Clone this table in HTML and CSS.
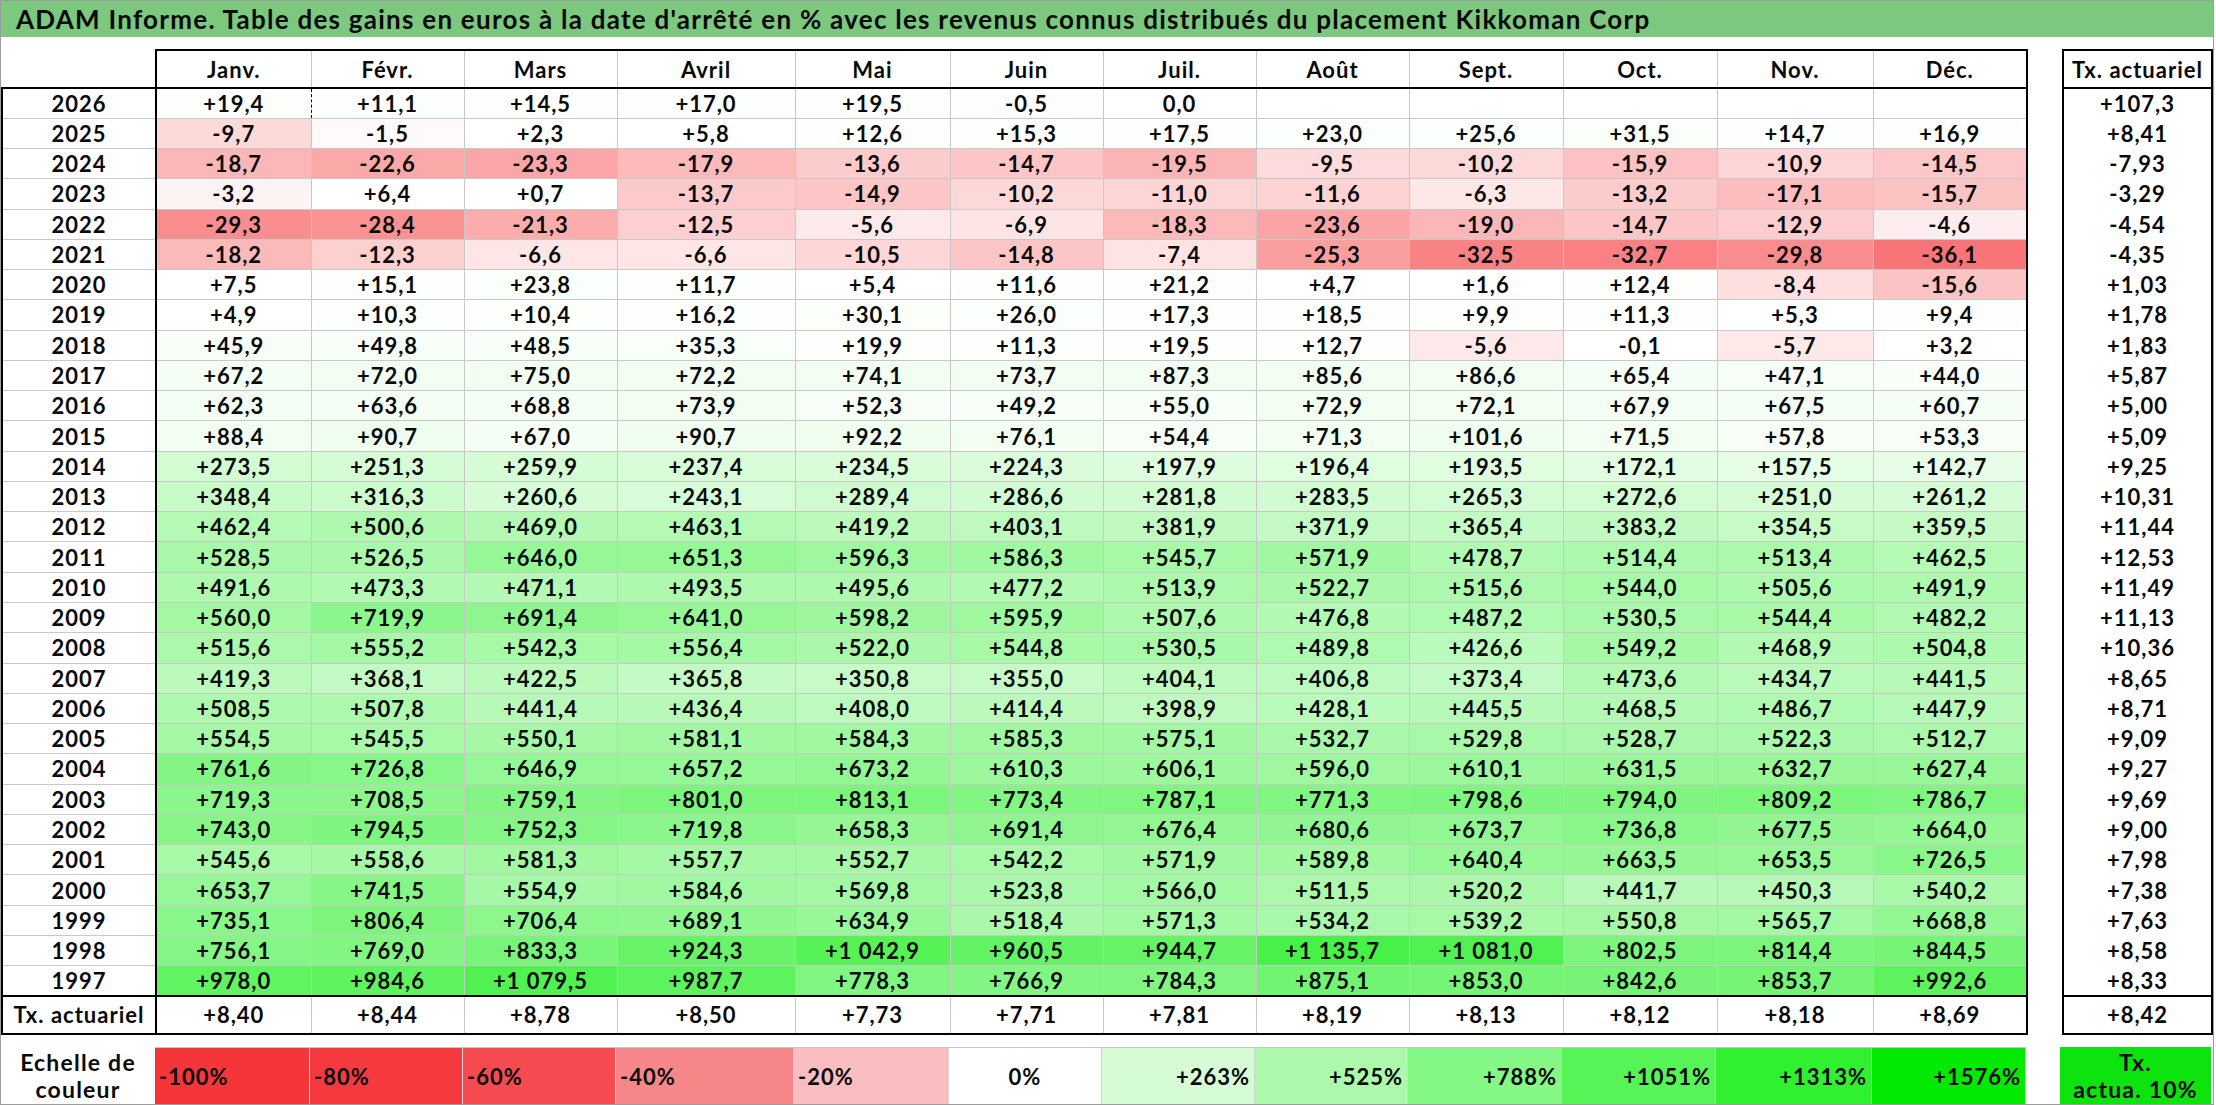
FILE: index.html
```html
<!DOCTYPE html>
<html lang="fr">
<head>
<meta charset="utf-8">
<title>ADAM Informe - Kikkoman Corp</title>
<link rel="stylesheet" href="styles.css">
</head>
<body>
<div class="sheet">
  <div class="title">ADAM Informe. Table des gains en euros à la date d'arrêté en % avec les revenus connus distribués du placement Kikkoman Corp</div>
  <div class="tables">
    <table class="main">
      <colgroup>
        <col class="c-year"><col style="width:155px"><col style="width:153px"><col style="width:153px"><col style="width:178px"><col style="width:155px"><col style="width:153px"><col style="width:153px"><col style="width:153px"><col style="width:154px"><col style="width:154px"><col style="width:156px"><col style="width:154px">
      </colgroup>
      <thead>
        <tr class="hdr"><th class="corner"></th><th>Janv.</th><th>Févr.</th><th>Mars</th><th>Avril</th><th>Mai</th><th>Juin</th><th>Juil.</th><th>Août</th><th>Sept.</th><th>Oct.</th><th>Nov.</th><th>Déc.</th></tr>
      </thead>
      <tbody>
        <tr><th>2026</th><td class="v dash-r">+19,4</td><td class="v dash-l">+11,1</td><td class="v">+14,5</td><td class="v">+17,0</td><td class="v">+19,5</td><td class="v">-0,5</td><td class="v">0,0</td><td class="v"></td><td class="v"></td><td class="v"></td><td class="v"></td><td class="v"></td></tr>
        <tr><th>2025</th><td class="v">-9,7</td><td class="v">-1,5</td><td class="v">+2,3</td><td class="v">+5,8</td><td class="v">+12,6</td><td class="v">+15,3</td><td class="v">+17,5</td><td class="v">+23,0</td><td class="v">+25,6</td><td class="v">+31,5</td><td class="v">+14,7</td><td class="v">+16,9</td></tr>
        <tr><th>2024</th><td class="v">-18,7</td><td class="v">-22,6</td><td class="v">-23,3</td><td class="v">-17,9</td><td class="v">-13,6</td><td class="v">-14,7</td><td class="v">-19,5</td><td class="v">-9,5</td><td class="v">-10,2</td><td class="v">-15,9</td><td class="v">-10,9</td><td class="v">-14,5</td></tr>
        <tr><th>2023</th><td class="v">-3,2</td><td class="v">+6,4</td><td class="v">+0,7</td><td class="v">-13,7</td><td class="v">-14,9</td><td class="v">-10,2</td><td class="v">-11,0</td><td class="v">-11,6</td><td class="v">-6,3</td><td class="v">-13,2</td><td class="v">-17,1</td><td class="v">-15,7</td></tr>
        <tr><th>2022</th><td class="v">-29,3</td><td class="v">-28,4</td><td class="v">-21,3</td><td class="v">-12,5</td><td class="v">-5,6</td><td class="v">-6,9</td><td class="v">-18,3</td><td class="v">-23,6</td><td class="v">-19,0</td><td class="v">-14,7</td><td class="v">-12,9</td><td class="v">-4,6</td></tr>
        <tr><th>2021</th><td class="v">-18,2</td><td class="v">-12,3</td><td class="v">-6,6</td><td class="v">-6,6</td><td class="v">-10,5</td><td class="v">-14,8</td><td class="v">-7,4</td><td class="v">-25,3</td><td class="v">-32,5</td><td class="v">-32,7</td><td class="v">-29,8</td><td class="v">-36,1</td></tr>
        <tr><th>2020</th><td class="v">+7,5</td><td class="v">+15,1</td><td class="v">+23,8</td><td class="v">+11,7</td><td class="v">+5,4</td><td class="v">+11,6</td><td class="v">+21,2</td><td class="v">+4,7</td><td class="v">+1,6</td><td class="v">+12,4</td><td class="v">-8,4</td><td class="v">-15,6</td></tr>
        <tr><th>2019</th><td class="v">+4,9</td><td class="v">+10,3</td><td class="v">+10,4</td><td class="v">+16,2</td><td class="v">+30,1</td><td class="v">+26,0</td><td class="v">+17,3</td><td class="v">+18,5</td><td class="v">+9,9</td><td class="v">+11,3</td><td class="v">+5,3</td><td class="v">+9,4</td></tr>
        <tr><th>2018</th><td class="v">+45,9</td><td class="v">+49,8</td><td class="v">+48,5</td><td class="v">+35,3</td><td class="v">+19,9</td><td class="v">+11,3</td><td class="v">+19,5</td><td class="v">+12,7</td><td class="v">-5,6</td><td class="v">-0,1</td><td class="v">-5,7</td><td class="v">+3,2</td></tr>
        <tr><th>2017</th><td class="v">+67,2</td><td class="v">+72,0</td><td class="v">+75,0</td><td class="v">+72,2</td><td class="v">+74,1</td><td class="v">+73,7</td><td class="v">+87,3</td><td class="v">+85,6</td><td class="v">+86,6</td><td class="v">+65,4</td><td class="v">+47,1</td><td class="v">+44,0</td></tr>
        <tr><th>2016</th><td class="v">+62,3</td><td class="v">+63,6</td><td class="v">+68,8</td><td class="v">+73,9</td><td class="v">+52,3</td><td class="v">+49,2</td><td class="v">+55,0</td><td class="v">+72,9</td><td class="v">+72,1</td><td class="v">+67,9</td><td class="v">+67,5</td><td class="v">+60,7</td></tr>
        <tr><th>2015</th><td class="v">+88,4</td><td class="v">+90,7</td><td class="v">+67,0</td><td class="v">+90,7</td><td class="v">+92,2</td><td class="v">+76,1</td><td class="v">+54,4</td><td class="v">+71,3</td><td class="v">+101,6</td><td class="v">+71,5</td><td class="v">+57,8</td><td class="v">+53,3</td></tr>
        <tr><th>2014</th><td class="v">+273,5</td><td class="v">+251,3</td><td class="v">+259,9</td><td class="v">+237,4</td><td class="v">+234,5</td><td class="v">+224,3</td><td class="v">+197,9</td><td class="v">+196,4</td><td class="v">+193,5</td><td class="v">+172,1</td><td class="v">+157,5</td><td class="v">+142,7</td></tr>
        <tr><th>2013</th><td class="v">+348,4</td><td class="v">+316,3</td><td class="v">+260,6</td><td class="v">+243,1</td><td class="v">+289,4</td><td class="v">+286,6</td><td class="v">+281,8</td><td class="v">+283,5</td><td class="v">+265,3</td><td class="v">+272,6</td><td class="v">+251,0</td><td class="v">+261,2</td></tr>
        <tr><th>2012</th><td class="v">+462,4</td><td class="v">+500,6</td><td class="v">+469,0</td><td class="v">+463,1</td><td class="v">+419,2</td><td class="v">+403,1</td><td class="v">+381,9</td><td class="v">+371,9</td><td class="v">+365,4</td><td class="v">+383,2</td><td class="v">+354,5</td><td class="v">+359,5</td></tr>
        <tr><th>2011</th><td class="v">+528,5</td><td class="v">+526,5</td><td class="v">+646,0</td><td class="v">+651,3</td><td class="v">+596,3</td><td class="v">+586,3</td><td class="v">+545,7</td><td class="v">+571,9</td><td class="v">+478,7</td><td class="v">+514,4</td><td class="v">+513,4</td><td class="v">+462,5</td></tr>
        <tr><th>2010</th><td class="v">+491,6</td><td class="v">+473,3</td><td class="v">+471,1</td><td class="v">+493,5</td><td class="v">+495,6</td><td class="v">+477,2</td><td class="v">+513,9</td><td class="v">+522,7</td><td class="v">+515,6</td><td class="v">+544,0</td><td class="v">+505,6</td><td class="v">+491,9</td></tr>
        <tr><th>2009</th><td class="v">+560,0</td><td class="v">+719,9</td><td class="v">+691,4</td><td class="v">+641,0</td><td class="v">+598,2</td><td class="v">+595,9</td><td class="v">+507,6</td><td class="v">+476,8</td><td class="v">+487,2</td><td class="v">+530,5</td><td class="v">+544,4</td><td class="v">+482,2</td></tr>
        <tr><th>2008</th><td class="v">+515,6</td><td class="v">+555,2</td><td class="v">+542,3</td><td class="v">+556,4</td><td class="v">+522,0</td><td class="v">+544,8</td><td class="v">+530,5</td><td class="v">+489,8</td><td class="v">+426,6</td><td class="v">+549,2</td><td class="v">+468,9</td><td class="v">+504,8</td></tr>
        <tr><th>2007</th><td class="v">+419,3</td><td class="v">+368,1</td><td class="v">+422,5</td><td class="v">+365,8</td><td class="v">+350,8</td><td class="v">+355,0</td><td class="v">+404,1</td><td class="v">+406,8</td><td class="v">+373,4</td><td class="v">+473,6</td><td class="v">+434,7</td><td class="v">+441,5</td></tr>
        <tr><th>2006</th><td class="v">+508,5</td><td class="v">+507,8</td><td class="v">+441,4</td><td class="v">+436,4</td><td class="v">+408,0</td><td class="v">+414,4</td><td class="v">+398,9</td><td class="v">+428,1</td><td class="v">+445,5</td><td class="v">+468,5</td><td class="v">+486,7</td><td class="v">+447,9</td></tr>
        <tr><th>2005</th><td class="v">+554,5</td><td class="v">+545,5</td><td class="v">+550,1</td><td class="v">+581,1</td><td class="v">+584,3</td><td class="v">+585,3</td><td class="v">+575,1</td><td class="v">+532,7</td><td class="v">+529,8</td><td class="v">+528,7</td><td class="v">+522,3</td><td class="v">+512,7</td></tr>
        <tr><th>2004</th><td class="v">+761,6</td><td class="v">+726,8</td><td class="v">+646,9</td><td class="v">+657,2</td><td class="v">+673,2</td><td class="v">+610,3</td><td class="v">+606,1</td><td class="v">+596,0</td><td class="v">+610,1</td><td class="v">+631,5</td><td class="v">+632,7</td><td class="v">+627,4</td></tr>
        <tr><th>2003</th><td class="v">+719,3</td><td class="v">+708,5</td><td class="v">+759,1</td><td class="v">+801,0</td><td class="v">+813,1</td><td class="v">+773,4</td><td class="v">+787,1</td><td class="v">+771,3</td><td class="v">+798,6</td><td class="v">+794,0</td><td class="v">+809,2</td><td class="v">+786,7</td></tr>
        <tr><th>2002</th><td class="v">+743,0</td><td class="v">+794,5</td><td class="v">+752,3</td><td class="v">+719,8</td><td class="v">+658,3</td><td class="v">+691,4</td><td class="v">+676,4</td><td class="v">+680,6</td><td class="v">+673,7</td><td class="v">+736,8</td><td class="v">+677,5</td><td class="v">+664,0</td></tr>
        <tr><th>2001</th><td class="v">+545,6</td><td class="v">+558,6</td><td class="v">+581,3</td><td class="v">+557,7</td><td class="v">+552,7</td><td class="v">+542,2</td><td class="v">+571,9</td><td class="v">+589,8</td><td class="v">+640,4</td><td class="v">+663,5</td><td class="v">+653,5</td><td class="v">+726,5</td></tr>
        <tr><th>2000</th><td class="v">+653,7</td><td class="v">+741,5</td><td class="v">+554,9</td><td class="v">+584,6</td><td class="v">+569,8</td><td class="v">+523,8</td><td class="v">+566,0</td><td class="v">+511,5</td><td class="v">+520,2</td><td class="v">+441,7</td><td class="v">+450,3</td><td class="v">+540,2</td></tr>
        <tr><th>1999</th><td class="v">+735,1</td><td class="v">+806,4</td><td class="v">+706,4</td><td class="v">+689,1</td><td class="v">+634,9</td><td class="v">+518,4</td><td class="v">+571,3</td><td class="v">+534,2</td><td class="v">+539,2</td><td class="v">+550,8</td><td class="v">+565,7</td><td class="v">+668,8</td></tr>
        <tr><th>1998</th><td class="v">+756,1</td><td class="v">+769,0</td><td class="v">+833,3</td><td class="v">+924,3</td><td class="v">+1&nbsp;042,9</td><td class="v">+960,5</td><td class="v">+944,7</td><td class="v">+1&nbsp;135,7</td><td class="v">+1&nbsp;081,0</td><td class="v">+802,5</td><td class="v">+814,4</td><td class="v">+844,5</td></tr>
        <tr><th>1997</th><td class="v">+978,0</td><td class="v">+984,6</td><td class="v">+1&nbsp;079,5</td><td class="v">+987,7</td><td class="v">+778,3</td><td class="v">+766,9</td><td class="v">+784,3</td><td class="v">+875,1</td><td class="v">+853,0</td><td class="v">+842,6</td><td class="v">+853,7</td><td class="v">+992,6</td></tr>
        <tr class="tx"><th>Tx. actuariel</th><td>+8,40</td><td>+8,44</td><td>+8,78</td><td>+8,50</td><td>+7,73</td><td>+7,71</td><td>+7,81</td><td>+8,19</td><td>+8,13</td><td>+8,12</td><td>+8,18</td><td>+8,69</td></tr>
      </tbody>
    </table>

    <table class="side">
      <thead><tr class="hdr"><th>Tx. actuariel</th></tr></thead>
      <tbody>
        <tr><td>+107,3</td></tr>
        <tr><td>+8,41</td></tr>
        <tr><td>-7,93</td></tr>
        <tr><td>-3,29</td></tr>
        <tr><td>-4,54</td></tr>
        <tr><td>-4,35</td></tr>
        <tr><td>+1,03</td></tr>
        <tr><td>+1,78</td></tr>
        <tr><td>+1,83</td></tr>
        <tr><td>+5,87</td></tr>
        <tr><td>+5,00</td></tr>
        <tr><td>+5,09</td></tr>
        <tr><td>+9,25</td></tr>
        <tr><td>+10,31</td></tr>
        <tr><td>+11,44</td></tr>
        <tr><td>+12,53</td></tr>
        <tr><td>+11,49</td></tr>
        <tr><td>+11,13</td></tr>
        <tr><td>+10,36</td></tr>
        <tr><td>+8,65</td></tr>
        <tr><td>+8,71</td></tr>
        <tr><td>+9,09</td></tr>
        <tr><td>+9,27</td></tr>
        <tr><td>+9,69</td></tr>
        <tr><td>+9,00</td></tr>
        <tr><td>+7,98</td></tr>
        <tr><td>+7,38</td></tr>
        <tr><td>+7,63</td></tr>
        <tr><td>+8,58</td></tr>
        <tr><td>+8,33</td></tr>
        <tr class="tx"><td>+8,42</td></tr>
      </tbody>
    </table>
  </div>

  <div class="legend">
    <div class="lg-label">Echelle de<br>couleur</div>
    <div class="lg-cells">
      <div class="lg neg l1" style="width:155px">-100%</div>
      <div class="lg neg l2" style="width:153px">-80%</div>
      <div class="lg neg l3" style="width:153px">-60%</div>
      <div class="lg neg l4" style="width:178px">-40%</div>
      <div class="lg neg l5" style="width:155px">-20%</div>
      <div class="lg mid l6" style="width:153px">0%</div>
      <div class="lg pos l7" style="width:153px">+263%</div>
      <div class="lg pos l8" style="width:153px">+525%</div>
      <div class="lg pos l9" style="width:154px">+788%</div>
      <div class="lg pos l10" style="width:154px">+1051%</div>
      <div class="lg pos l11" style="width:156px">+1313%</div>
      <div class="lg pos l12" style="width:154px">+1576%</div>
    </div>
    <div class="lg-tx">Tx.<br>actua. 10%</div>
  </div>
</div>
<script src="script.js"></script>
</body>
</html>
```

FILE: styles.css
```css
* { box-sizing: border-box; }

html, body {
  margin: 0;
  padding: 0;
  background: #ffffff;
}

body {
  font-family: Lato, "Open Sans", "Liberation Sans", sans-serif;
  font-weight: 700;
  color: #0a0a0a;
}

.sheet {
  width: 2214px;
  height: 1105px;
  border: 1px solid #9c9c9c;
  background: #ffffff;
  overflow: hidden;
}

.title {
  height: 36px;
  background: #7dc87f;
  padding-left: 15px;
  font-size: 26px;
  line-height: 36px;
  letter-spacing: 1.25px;
  white-space: nowrap;
}

.tables {
  display: flex;
  align-items: flex-start;
  margin-top: 12px;
}

table {
  border-collapse: collapse;
  table-layout: fixed;
  font-size: 22px;
  letter-spacing: 1px;
}

th, td {
  padding: 0;
  text-align: center;
  vertical-align: middle;
  white-space: nowrap;
  font-weight: 700;
}

/* main grid */
.main { width: 2025px; }
.main .c-year { width: 154px; }

.main tr { height: 30.27px; }
.main tr.hdr { height: 38px; }
.main tr.tx { height: 38px; }

.main thead th {
  border-top: 2px solid #000;
  border-bottom: 2px solid #000;
  border-left: 1px solid #c8c8c8;
  border-right: 1px solid #c8c8c8;
}
.main thead th:nth-child(2) { border-left: 2px solid #000; }
.main thead th:last-child { border-right: 2px solid #000; }
.main thead th.corner {
  border-top: none;
  border-left: none;
  border-right: 2px solid #000;
}

.main tbody th {
  border-left: 2px solid #000;
  border-right: 2px solid #000;
  border-bottom: 1px solid #c8c8c8;
}

.main tbody td {
  border: 1px solid #c8c8c8;
}
.main tbody td:last-child { border-right: 2px solid #000; }

.main tbody td.dash-r { border-right: 1px dashed #000; }
.main tbody td.dash-l { border-left: 1px dashed #000; }

.main tr.tx th,
.main tr.tx td {
  border-top: 2px solid #000;
  border-bottom: 2px solid #000;
}

/* side column */
.side {
  width: 151px;
  margin-left: 34px;
  border: 2px solid #000;
}
.side tr { height: 30.27px; }
.side tr.hdr { height: 38px; }
.side tr.tx { height: 38px; }
.side thead th { border-bottom: 2px solid #000; }
.side tr.tx td { border-top: 2px solid #000; }

/* legend */
.legend {
  display: flex;
  align-items: stretch;
  height: 58px;
  margin-top: 12px;
}

.lg-label {
  width: 154px;
  font-size: 23px;
  line-height: 27px;
  text-align: center;
  letter-spacing: 1.2px;
  display: flex;
  align-items: center;
  justify-content: center;
}

.lg-cells {
  display: flex;
  border-top: 1px solid #c8c8c8;
}

.lg {
  font-size: 22px;
  letter-spacing: 1px;
  display: flex;
  align-items: center;
  padding: 0 4px;
  border-right: 1px solid #d4d4d4;
}
.lg.neg { justify-content: flex-start; }
.lg.mid { justify-content: center; }
.lg.pos { justify-content: flex-end; }

.l1 { background: #f4363b; }
.l2 { background: #f43a3f; }
.l3 { background: #f54b50; }
.l4 { background: #f78688; }
.l5 { background: #fbbec0; }
.l6 { background: #ffffff; }
.l7 { background: #d6fcd6; }
.l8 { background: #acf9ac; }
.l9 { background: #84f784; }
.l10 { background: #56f456; }
.l11 { background: #30f130; }
.l12 { background: #02ea02; }

.lg-tx {
  width: 151px;
  margin-left: 34px;
  background: #0de30d;
  font-size: 23px;
  line-height: 27px;
  letter-spacing: 1.2px;
  text-align: center;
  display: flex;
  align-items: center;
  justify-content: center;
}
```

FILE: script.js
```js
(function () {
  var cells = document.querySelectorAll('.main td.v');
  for (var i = 0; i < cells.length; i++) {
    var td = cells[i];
    var s = td.textContent.replace(/[\s\u00a0+]/g, '').replace(',', '.');
    if (!s) continue;
    var v = parseFloat(s);
    if (isNaN(v)) continue;
    var r, g, b, t;
    if (v > 0) {
      t = Math.min(v / 1576, 1);
      r = Math.round(255 - 255 * t);
      g = Math.round(255 - 20 * t);
      b = r;
    } else if (v < 0) {
      t = Math.min(-v / 36.1, 1);
      r = Math.round(255 - 7 * t);
      g = Math.round(255 - 139 * t);
      b = Math.round(255 - 137 * t);
    } else {
      r = g = b = 255;
    }
    td.style.backgroundColor = 'rgb(' + r + ',' + g + ',' + b + ')';
  }
})();
```
